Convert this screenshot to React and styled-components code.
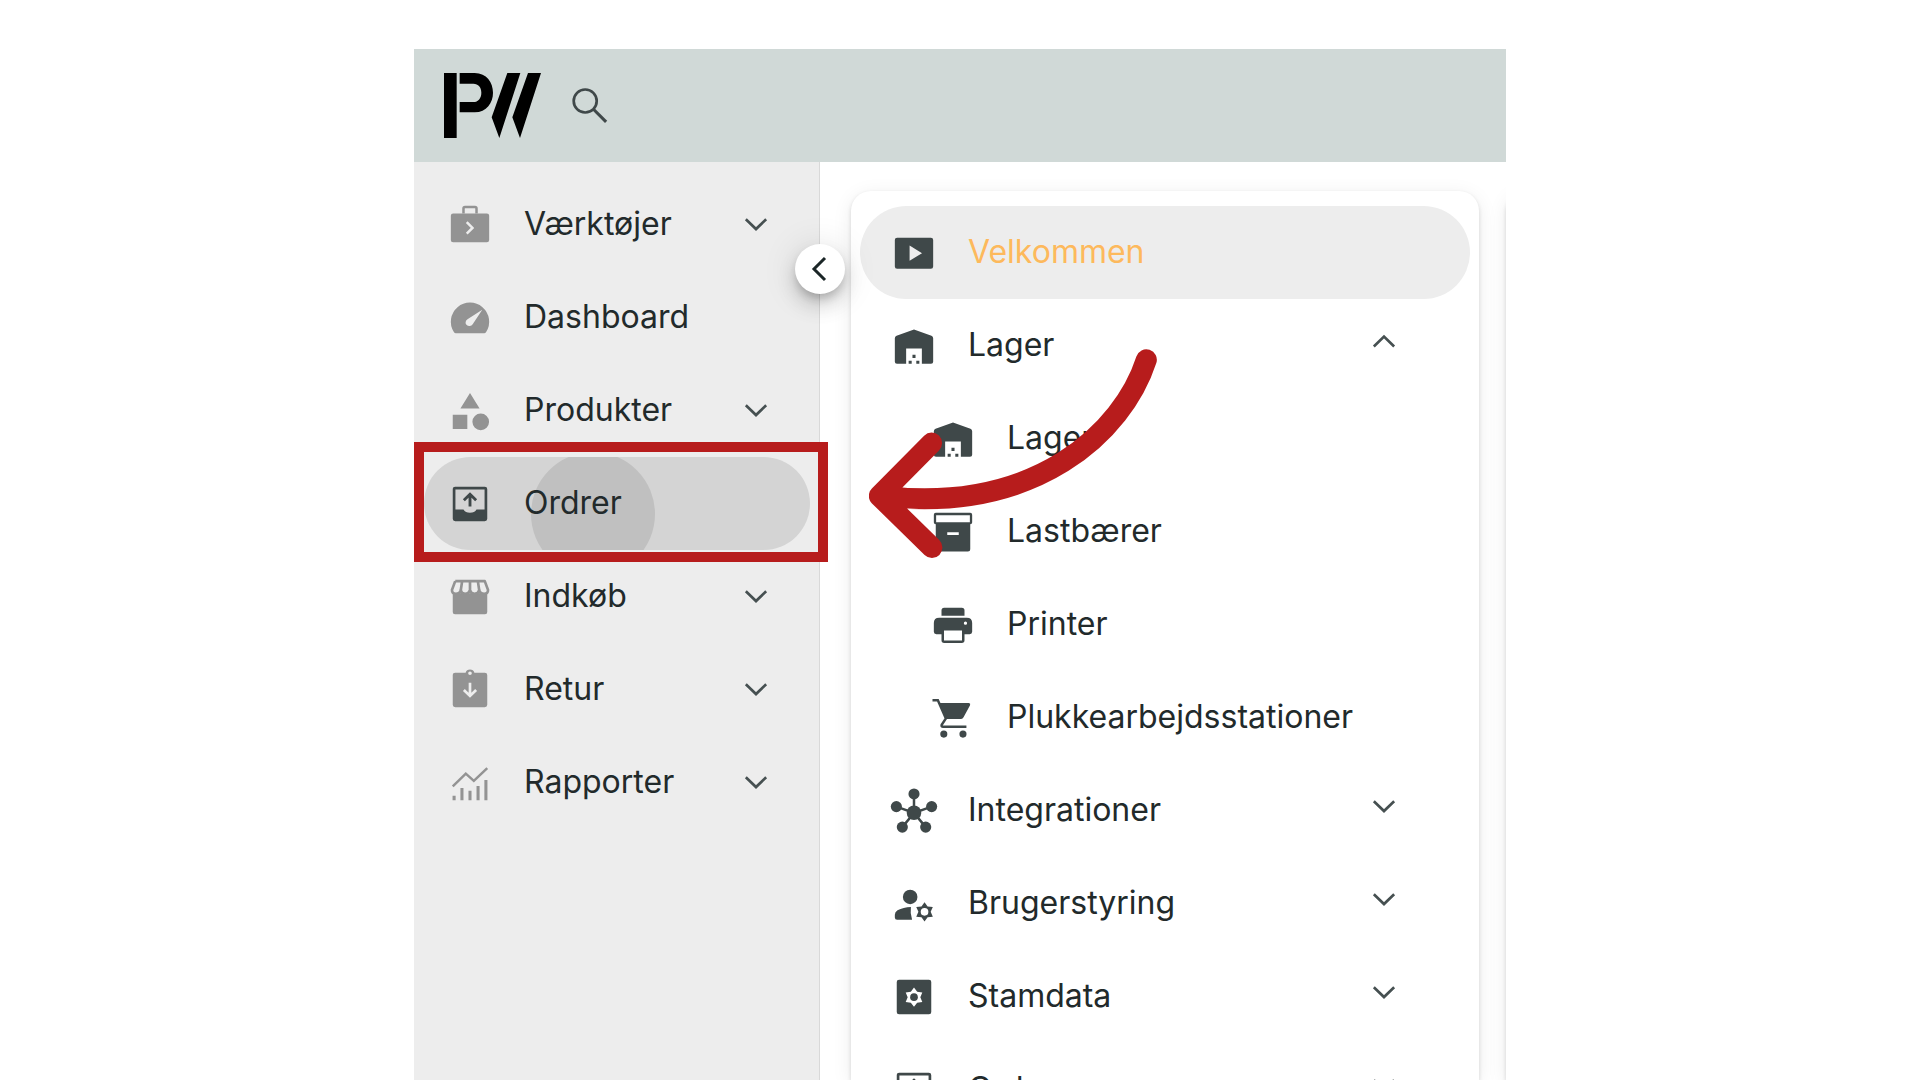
import React from "react";
import styled, { createGlobalStyle, css } from "styled-components";

const RED = "#b71c1c";

const GlobalStyle = createGlobalStyle`
  *, *::before, *::after { box-sizing: border-box; }
  body {
    margin: 0;
    background: #fff;
    color: #222a2b;
    font-family: Inter, "Liberation Sans", sans-serif;
    font-size: 32px;
    font-optical-sizing: none;
  }
`;

const Page = styled.div`
  height: 100vh;
  padding-top: 49px;
  overflow: hidden;
  display: flex;
  justify-content: center;
`;

const Frame = styled.div`
  position: relative;
  width: 100%;
  max-width: 1092px;
  display: flex;
  flex-direction: column;
`;

const Header = styled.header`
  flex: none;
  display: flex;
  align-items: center;
  gap: 25px;
  padding: 24px 30px;
  background: #d0d9d7;
`;

const LogoLink = styled.a`
  display: flex;
  color: #000;
`;

const IconButton = styled.button`
  display: flex;
  padding: 0;
  border: 0;
  background: none;
  color: #465354;
  cursor: pointer;
`;

const Columns = styled.div`
  flex: 1;
  min-height: 0;
  display: flex;
`;

const Sidebar = styled.nav`
  position: relative;
  z-index: 1;
  flex: none;
  width: 406px;
  padding: 16px 9px 0 10px;
  background: #ededed;
  border-right: 1px solid #d9d9d9;
`;

const List = styled.ul`
  margin: 0;
  padding: 0;
  list-style: none;
`;

const Item = styled.li`
  position: relative;
`;

const Row = styled.button`
  position: relative;
  overflow: hidden;
  width: 100%;
  height: 93px;
  display: flex;
  align-items: center;
  gap: 31px;
  padding: 0 31px 0 23px;
  border: 0;
  border-radius: 47px;
  background: ${(p) => (p.$pressed ? "#d4d4d4" : "transparent")};
  color: inherit;
  font: inherit;
  text-align: left;
  cursor: pointer;
`;

const CardRow = styled(Row)`
  padding: 0 63px 0 ${(p) => (p.$nested ? "70px" : "31px")};
  ${(p) =>
    p.$current &&
    css`
      background: #ededed;
      color: #fdb95c;
    `}
`;

const Label = styled.span`
  position: relative;
  flex: 1;
  padding-bottom: 2px;
  white-space: nowrap;
`;

const Glyph = styled.svg`
  position: relative;
  flex: none;
  width: 46px;
  height: 46px;
  overflow: visible;
  color: ${(p) => (p.$muted ? "#939393" : "#3f4849")};
`;

const Chevron = styled(Glyph)`
  margin-bottom: ${(p) => (p.$raised ? "8px" : "0")};
  color: #465051;
`;

const Ripple = styled.span`
  position: absolute;
  left: 107px;
  top: -5px;
  width: 124px;
  height: 124px;
  border-radius: 50%;
  background: #c0c0c0;
`;

const Highlight = styled.div`
  position: absolute;
  inset: -15px -18px -12px -10px;
  z-index: 2;
  border: 10px solid ${RED};
  pointer-events: none;
`;

const CollapseButton = styled.button`
  position: absolute;
  top: 82px;
  right: -26px;
  width: 50px;
  height: 50px;
  display: grid;
  place-items: center;
  padding: 0;
  border: 0;
  border-radius: 50%;
  background: #fff;
  color: #1b2627;
  box-shadow: 0 6px 10px -2px rgba(0, 0, 0, 0.2), 0 12px 20px rgba(0, 0, 0, 0.14),
    0 2px 36px rgba(0, 0, 0, 0.12);
  cursor: pointer;
`;

const Main = styled.main`
  flex: 1;
  min-width: 0;
  display: flex;
  gap: 27px;
  padding: 29px 0 0 31px;
  overflow: hidden;
`;

const Card = styled.section`
  flex: 1;
  min-width: 0;
  padding: 15px 9px;
  border-radius: 20px 20px 0 0;
  background: #fff;
  box-shadow: 0 2px 4px rgba(0, 0, 0, 0.14), 0 4px 20px rgba(0, 0, 0, 0.08);
`;

const NextCard = styled(Card)`
  flex: none;
  width: 60px;
  margin-right: -60px;
`;

const Arrow = styled.svg`
  position: absolute;
  left: 455px;
  top: 300px;
  z-index: 3;
  width: 288px;
  height: 210px;
  pointer-events: none;
`;

const line = (width = 1.3) => ({ fill: "none", stroke: "currentColor", strokeWidth: width });

const gearPath = (cx, cy, outer, inner) =>
  Array.from({ length: 12 }, (_, i) => {
    const r = i % 2 ? inner : outer;
    const a = (Math.PI / 6) * i - Math.PI / 2;
    return `${i ? "L" : "M"}${(cx + r * Math.cos(a)).toFixed(2)} ${(cy + r * Math.sin(a)).toFixed(2)}`;
  }).join("") + "Z";

const outbox = (
  <>
    <path
      fill="currentColor"
      fillRule="evenodd"
      d="M4.3 3H19.7Q21 3 21 4.3V19.7Q21 21 19.7 21H4.3Q3 21 3 19.7V4.3Q3 3 4.3 3ZM4.4 4.4V14.9H8.6Q9.6 16.6 12 16.6T15.4 14.9H19.6V4.4Z"
    />
    <path {...line(1.5)} d="M12 13.3V7M8.8 10 12 6.9 15.2 10" />
  </>
);

const warehouse = (
  <path
    fill="currentColor"
    fillRule="evenodd"
    d="M12 3.4 21.1 6.7Q22 7.1 22 8V20.2Q22 21.3 20.9 21.3H16.1V13.3H7.9V21.3H3.1Q2 21.3 2 20.2V8Q2 7.1 2.9 6.7ZM11.2 16.6H12.8V18.2H11.2ZM9.2 19.7H10.8V21.3H9.2ZM13.2 19.7H14.8V21.3H13.2Z"
  />
);

const ICONS = {
  toolbox: (
    <>
      <rect x="2" y="6" width="20" height="15" rx="1.2" fill="currentColor" />
      <path {...line(1.3)} d="M8.6 6V3.4Q8.6 2.6 9.4 2.6H14.6Q15.4 2.6 15.4 3.4V6" />
      <path {...line(1.3)} stroke="#ededed" d="M10.3 10.5 13.3 13.5 10.3 16.5" />
    </>
  ),
  speed: (
    <path
      fill="currentColor"
      fillRule="evenodd"
      d="M4.6 20Q4 20 3.5 19.2A10 10 0 1 1 20.5 19.2Q20 20 19.4 20ZM10.3 15.7Q10.9 16.3 11.9 16.2T13.4 15.3L18.4 7.7 10.7 12.6Q9.8 13.2 9.7 14.2T10.3 15.7Z"
    />
  ),
  category: (
    <path
      fill="currentColor"
      d="M12 2.6 17 10.7H7ZM3 13.9H10.6V21.4H3ZM17.6 13.3A4.35 4.35 0 1 1 17.6 22 4.35 4.35 0 1 1 17.6 13.3Z"
    />
  ),
  outbox,
  store: (
    <>
      <path fill="currentColor" d="M3 10H21V19.8Q21 21 19.8 21H4.2Q3 21 3 19.8Z" />
      <path
        {...line(1.4)}
        strokeLinejoin="round"
        d="M4.3 3.7H19.7L21.4 8.3Q21.5 10.2 19.4 10.3 17.2 10.3 16.8 8.4L16.1 3.7M4.3 3.7 2.6 8.3Q2.5 10.2 4.6 10.3 6.8 10.3 7.2 8.4L7.9 3.7M7.2 8.4Q7.4 10.3 9.4 10.3T12 8.4V3.7M12 8.4Q12.4 10.3 14.4 10.3T16.8 8.4"
      />
    </>
  ),
  clipboard: (
    <>
      <path
        fill="currentColor"
        fillRule="evenodd"
        d="M4.3 3H9.7A2.4 2.4 0 0 1 14.3 3H19.7Q21 3 21 4.3V19.7Q21 21 19.7 21H4.3Q3 21 3 19.7V4.3Q3 3 4.3 3ZM12 2.3A.95.95 0 1 0 12 4.2 .95.95 0 1 0 12 2.3Z"
      />
      <path {...line(1.4)} stroke="#ededed" d="M12 8.2V14.9M8.8 12 12 15.1 15.2 12" />
    </>
  ),
  chart: (
    <>
      <path {...line(1.3)} d="M3 13.8 9.8 7.1 14 10.9 21 4.2" />
      <path {...line(1.6)} d="M3.7 21V18.6M7.8 21V14.6M12 21V16M16.2 21V13.5M20.3 21V10.4" />
    </>
  ),
  slideshow: (
    <path
      fill="currentColor"
      fillRule="evenodd"
      d="M3.2 4H20.8Q22 4 22 5.2V19Q22 20.2 20.8 20.2H3.2Q2 20.2 2 19V5.2Q2 4 3.2 4ZM9.7 8.1V16L16.2 12.1Z"
    />
  ),
  warehouse,
  box: (
    <path
      fill="currentColor"
      fillRule="evenodd"
      d="M3 2H21Q22 2 22 3V7Q22 7.8 21 7.9V21Q21 22.2 19.8 22.2H4.2Q3 22.2 3 21V7.9Q2 7.8 2 7V3Q2 2 3 2ZM3.2 3.2V6.9H20.8V3.2ZM9 12.1V13.6H15V12.1Z"
    />
  ),
  printer: (
    <path
      fill="currentColor"
      fillRule="evenodd"
      d="M6 7.2V4.4Q6 3 7.4 3H16.6Q18 3 18 4.4V7.2ZM4.8 8.2H19.2Q22 8.2 22 11V15.5Q22 16.8 20.7 16.8H18V20Q18 21.4 16.6 21.4H7.4Q6 21.4 6 20V16.8H3.3Q2 16.8 2 15.5V11Q2 8.2 4.8 8.2ZM7.3 14.9V20.1H16.7V14.9ZM18.5 10.2A.85.85 0 1 0 18.5 11.9 .85.85 0 1 0 18.5 10.2Z"
    />
  ),
  cart: (
    <>
      <path
        fill="currentColor"
        d="M4.9 4.2H20.3Q21.3 4.4 20.9 5.3L17.5 11.6Q17.1 12.4 16.2 12.5H8.4Z"
      />
      <path {...line(1.3)} d="M1.3 2.8H4.1L8.3 12.2 6.1 15.6Q5.8 16.6 6.8 16.6H19" />
      <circle cx="7.2" cy="20.4" r="1.85" fill="currentColor" />
      <circle cx="17.2" cy="20.4" r="1.85" fill="currentColor" />
    </>
  ),
  hub: (
    <>
      <path {...line(1.3)} d="M12 3V13M2.8 9.7 12 13 21.2 9.7M5.9 20.4 12 13 18.1 20.4" />
      <circle cx="12" cy="12.9" r="3.8" fill="currentColor" />
      {[[12, 3.1], [2.8, 9.7], [21.2, 9.7], [5.9, 20.4], [18.1, 20.4]].map(([x, y]) => (
        <circle key={x} cx={x} cy={y} r="2.9" fill="currentColor" />
      ))}
    </>
  ),
  account: (
    <>
      <circle cx="10" cy="8.3" r="3.8" fill="currentColor" />
      <path
        fill="currentColor"
        d="M10.4 13.5Q9.9 16.8 11 20.2H3.2Q2 20.2 2 19V17.6Q2 16 3.4 15.2 6.4 13.6 10.4 13.5Z"
      />
      <path
        fill="currentColor"
        fillRule="evenodd"
        d={`${gearPath(17.5, 16.1, 5, 3.2)}M17.5 14.1A2 2 0 1 0 17.5 18.1 2 2 0 1 0 17.5 14.1Z`}
      />
    </>
  ),
  settings: (
    <>
      <rect x="3" y="3" width="18" height="18" rx="1.2" fill="currentColor" />
      <path fill="#fff" d={gearPath(12, 12.1, 5, 3.3)} />
      <circle cx="12" cy="12.1" r="2" fill="currentColor" />
    </>
  ),
  search: (
    <>
      <circle {...line(1.4)} cx="9.5" cy="9.4" r="6" />
      <path {...line(1.6)} d="M13.8 13.7 20.4 20.3" />
    </>
  ),
};

const Icon = ({ name, muted }) => (
  <Glyph viewBox="0 0 24 24" aria-hidden="true" $muted={muted}>
    {ICONS[name]}
  </Glyph>
);

const Toggle = ({ open, raised }) => (
  <Chevron viewBox="0 0 24 24" aria-hidden="true" $raised={raised}>
    <path {...line(1.4)} d={open ? "M6.7 14.3 12 9.2 17.3 14.3" : "M6.7 9 12 14.1 17.3 9"} />
  </Chevron>
);

const SIDEBAR = [
  { label: "Værktøjer", icon: "toolbox", toggle: true },
  { label: "Dashboard", icon: "speed" },
  { label: "Produkter", icon: "category", toggle: true },
  { label: "Ordrer", icon: "outbox", pressed: true },
  { label: "Indkøb", icon: "store", toggle: true },
  { label: "Retur", icon: "clipboard", toggle: true },
  { label: "Rapporter", icon: "chart", toggle: true },
];

const CARD = [
  { label: "Velkommen", icon: "slideshow", current: true },
  { label: "Lager", icon: "warehouse", toggle: true, open: true },
  { label: "Lager", icon: "warehouse", nested: true },
  { label: "Lastbærer", icon: "box", nested: true },
  { label: "Printer", icon: "printer", nested: true },
  { label: "Plukkearbejdsstationer", icon: "cart", nested: true },
  { label: "Integrationer", icon: "hub", toggle: true },
  { label: "Brugerstyring", icon: "account", toggle: true },
  { label: "Stamdata", icon: "settings", toggle: true },
  { label: "Ordrer", icon: "outbox", toggle: true },
];

export default function App() {
  return (
    <>
      <GlobalStyle />
      <Page>
        <Frame>
          <Header>
            <LogoLink href="#" aria-label="PW">
              <svg width="98" height="65" viewBox="0 0 294 195" fill="currentColor" aria-hidden="true">
                <path d="M0 0H38V195H0ZM47 0H92C128 0 147 29 147 59S128 118 92 118H47V87H88C103 87 112 75 112 59S103 32 88 32H47ZM190 0H229L166 195 143 133ZM252 0H291L228 195 205 133Z" />
              </svg>
            </LogoLink>
            <IconButton type="button" aria-label="Søg">
              <Icon name="search" />
            </IconButton>
          </Header>
          <Columns>
            <Sidebar>
              <List>
                {SIDEBAR.map((item) => (
                  <Item key={item.label}>
                    <Row type="button" $pressed={item.pressed}>
                      {item.pressed && <Ripple />}
                      <Icon name={item.icon} muted={!item.pressed} />
                      <Label>{item.label}</Label>
                      {item.toggle && <Toggle />}
                    </Row>
                    {item.pressed && <Highlight />}
                  </Item>
                ))}
              </List>
              <CollapseButton type="button" aria-label="Skjul menu">
                <svg width="26" height="26" viewBox="0 0 26 26" fill="none" stroke="currentColor" strokeWidth="3" aria-hidden="true">
                  <path d="M18 2 7 13 18 24" />
                </svg>
              </CollapseButton>
            </Sidebar>
            <Main>
              <Card>
                <List>
                  {CARD.map((item, i) => (
                    <Item key={i}>
                      <CardRow type="button" $current={item.current} $nested={item.nested}>
                        <Icon name={item.icon} />
                        <Label>{item.label}</Label>
                        {item.toggle && <Toggle open={item.open} raised />}
                      </CardRow>
                    </Item>
                  ))}
                </List>
              </Card>
              <NextCard />
            </Main>
          </Columns>
          <Arrow viewBox="87 27 865 630" aria-hidden="true">
            <path
              d="M920 59C850 275 590 525 118 468M275 309 118 468 276 623"
              fill="none"
              stroke={RED}
              strokeWidth="63"
              strokeLinecap="round"
              strokeLinejoin="round"
            />
          </Arrow>
        </Frame>
      </Page>
    </>
  );
}
